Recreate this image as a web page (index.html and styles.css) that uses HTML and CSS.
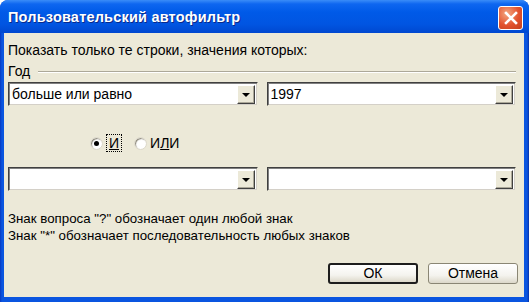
FILE: index.html
```html
<!DOCTYPE html>
<html lang="ru">
<head>
	<meta charset="UTF-8">
	<title>Пользовательский автофильтр</title>
	<link rel="stylesheet" href="styles.css">
</head>
<body>
	<div class="window">
		<!-- заголовок -->
		<div class="titlebar">
			<span class="title">Пользовательский автофильтр</span>
			<span class="close">
				<svg width="14" height="14" viewBox="0 0 14 14"><path d="M2 2 L12 12 M12 2 L2 12" stroke="#fff" stroke-width="2.6" stroke-linecap="square"/></svg>
			</span>
		</div>

		<div class="client">
			<div class="caption">Показать только те строки, значения которых:</div>

			<div class="group"><span>Год</span><i class="etch"></i></div>

			<div class="row first">
				<div class="combo"><span class="val">больше или равно</span><b class="drop"><i></i></b></div>
				<div class="combo"><span class="val">1997</span><b class="drop"><i></i></b></div>
			</div>

			<!-- И / ИЛИ -->
			<div class="radios">
				<label class="radio"><i class="dot on"></i><span class="focus"><u>И</u></span></label>
				<label class="radio"><i class="dot"></i><span>И<u>Л</u>И</span></label>
			</div>

			<div class="row second">
				<div class="combo"><span class="val"></span><b class="drop"><i></i></b></div>
				<div class="combo"><span class="val"></span><b class="drop"><i></i></b></div>
			</div>

			<div class="hint">
				<p>Знак вопроса "?" обозначает один любой знак</p>
				<p>Знак "*" обозначает последовательность любых знаков</p>
			</div>

			<div class="buttons">
				<button class="btn default">ОК</button>
				<button class="btn">Отмена</button>
			</div>
		</div>
	</div>
</body>
</html>
```

FILE: styles.css
```css
*{margin:0;padding:0;box-sizing:border-box;}
body{background:#fff;font-family:"Liberation Sans", Arial, sans-serif;font-size:14px;color:#000;}

/*окно*/
.window{width:529px;height:302px;display:flex;flex-direction:column;background:linear-gradient(90deg,#0838c0,#0a55e0 2px,#0a55e0 527px,#0630a8);border-radius:8px 8px 0 0;overflow:hidden;}

/*заголовок*/
.titlebar{height:33px;display:flex;align-items:center;justify-content:space-between;padding:0 6px 0 8px;background:linear-gradient(#3a8cf8 0,#0e66f0 4px,#005ae8 12px,#0155e2 24px,#0048d0 33px);}
.title{color:#fff;font-weight:bold;font-size:14.5px;letter-spacing:0.2px;text-shadow:1px 1px 0 #0a2a8a;}
.close{width:25px;height:24px;margin-top:2px;border:1px solid #fff;border-radius:3px;display:flex;align-items:center;justify-content:center;background:radial-gradient(circle at 35% 30%,#f4a882,#e2522e 55%,#c2401e);}

/*клиентская область*/
.client{flex:1;margin:0 5px 5px 4px;background:#ece9d8;padding:9px 8px 0 4px;display:flex;flex-direction:column;}
.caption{height:18px;line-height:16px;}
.group{display:flex;align-items:center;height:20px;margin-top:1px;}
.group span{margin-right:8px;}
.etch{flex:1;height:2px;border-top:1px solid #aca899;border-bottom:1px solid #fff;margin-top:1px;}

.row{display:flex;gap:9px;}
.row.first{margin-top:1px;}
.row.second{margin-top:16px;}
.combo{flex:1;height:24px;display:flex;align-items:center;background:#fff;border:1px solid;border-color:#404040 #ece9d8 #ece9d8 #404040;box-shadow:inset 1px 1px 0 #808080,inset -1px -1px 0 #d4d0c8;padding:1px 2px 1px 2px;}
.combo .val{flex:1;padding-left:1px;}
.drop{width:18px;height:19px;display:flex;align-items:center;justify-content:center;background:#ece9d8;border:1px solid;border-color:#fff #404040 #404040 #fff;box-shadow:inset -1px -1px 0 #aca899;}
.drop i{width:0;height:0;border-left:4px solid transparent;border-right:4px solid transparent;border-top:4px solid #000;margin-top:2px;}

/*переключатели*/
.radios{display:flex;margin:29px 0 0 82px;gap:12px;height:16px;align-items:center;}
.radio{display:flex;align-items:center;gap:3px;}
.dot{width:13px;height:13px;border-radius:50%;background:#fff;border:1px solid #dcd8ca;box-shadow:inset 1px 1px 1px #8c887a;display:flex;align-items:center;justify-content:center;}
.dot.on::after{content:"";width:5px;height:5px;border-radius:50%;background:#000;}
.focus{border:1px dotted #000;padding:1px 2px;line-height:14px;}

.hint{margin-top:19px;line-height:17px;font-size:13.3px;}

/*кнопки*/
.buttons{display:flex;justify-content:flex-end;gap:10px;margin:19px -2px 0 0;}
.btn{width:90px;height:21px;font-family:"Liberation Sans", Arial, sans-serif;font-size:14px;line-height:17px;background:linear-gradient(#fff,#f4f3ee 60%,#dcd8c9);border:1px solid #8a8674;border-radius:3px;}
.btn.default{border:2px solid #1d1d1d;}
```
